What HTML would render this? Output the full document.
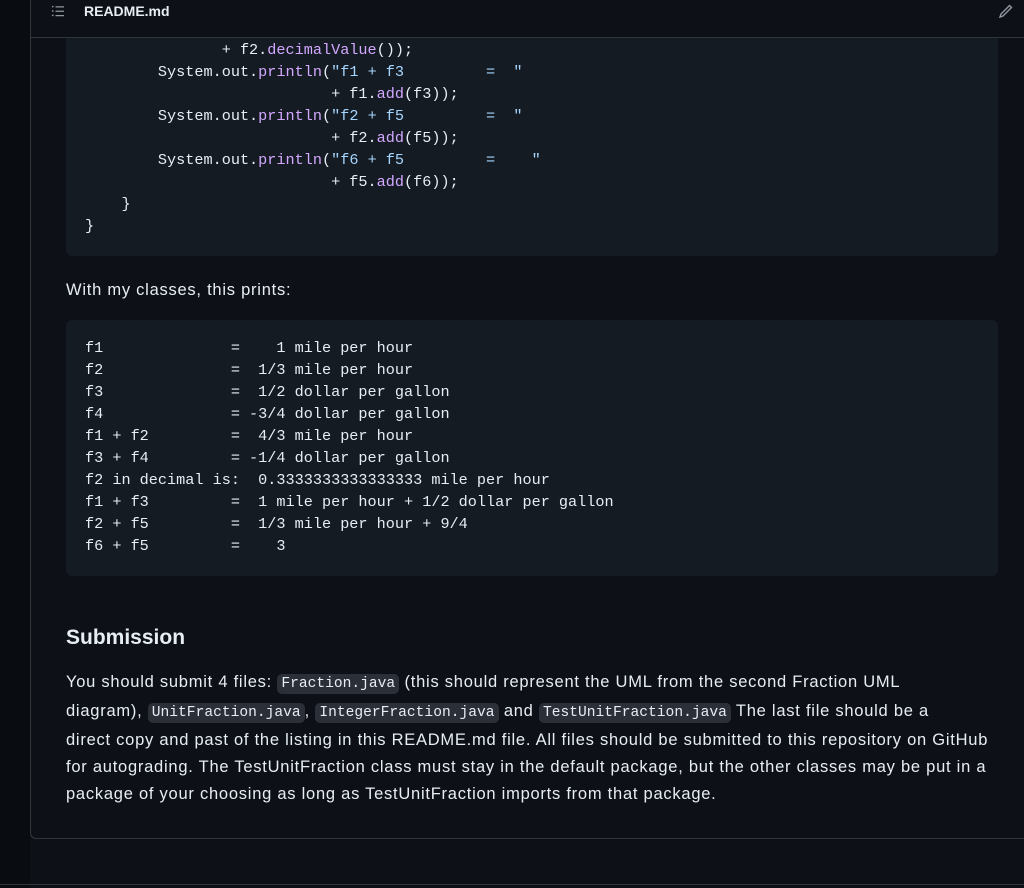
<!DOCTYPE html>
<html><head><style>
html,body{margin:0;padding:0;background:#0d1117;width:1024px;height:888px;overflow:hidden;font-family:"Liberation Sans",sans-serif;color:#e6edf3}
.outer{position:absolute;left:0;top:0;width:30px;height:888px;background:#090c10}
.box{position:absolute;left:30px;top:-10px;width:1010px;height:849px;border:1px solid #30363d;border-radius:6px;background:#0d1117;box-sizing:border-box}
.hdr{position:absolute;left:31px;top:0;width:993px;height:37px;border-bottom:1px solid #30363d;background:#0d1117}
.hdr .t{position:absolute;left:53px;top:2px;font-weight:bold;font-size:14px;line-height:18px}
pre{margin:0;font-family:"Liberation Mono",monospace;font-size:15.2px;line-height:22px;color:#e6edf3;white-space:pre}
.code{position:absolute;left:66px;width:932px;background:#151b23;border-radius:6px;box-sizing:border-box;padding:0 19px}
.p{color:#d2a8ff}.s{color:#a5d6ff}
.txt{position:absolute;left:66px;font-size:16.5px;line-height:27px;width:960px;white-space:nowrap;letter-spacing:0.75px}
code{font-family:"Liberation Mono",monospace;font-size:14.6px;background:#2b3038;border-radius:5px;padding:2px 4px;letter-spacing:0}
h2{position:absolute;left:66px;top:626px;margin:0;font-size:21px;font-weight:bold}
.bot{position:absolute;left:0;top:884px;width:1024px;height:1px;background:#30363d}
</style></head><body>
<div class="outer"></div>
<div class="box"></div>
<div class="code" style="top:37px;height:219px;border-radius:0 0 6px 6px"><pre style="padding-top:2px">               + f2.<span class="p">decimalValue</span>());
        System.out.<span class="p">println</span>(<span class="s">"f1 + f3         =  "</span>
                           + f1.<span class="p">add</span>(f3));
        System.out.<span class="p">println</span>(<span class="s">"f2 + f5         =  "</span>
                           + f2.<span class="p">add</span>(f5));
        System.out.<span class="p">println</span>(<span class="s">"f6 + f5         =    "</span>
                           + f5.<span class="p">add</span>(f6));
    }
}</pre></div>
<div class="hdr">
<svg style="position:absolute;left:20px;top:4px" width="14" height="14" viewBox="0 0 16 16" fill="#9198a1"><path d="M2 4a1 1 0 1 0 0-2 1 1 0 0 0 0 2Zm3.75-1.5a.75.75 0 0 0 0 1.5h8.5a.75.75 0 0 0 0-1.5h-8.5Zm0 5a.75.75 0 0 0 0 1.5h8.5a.75.75 0 0 0 0-1.5h-8.5Zm0 5a.75.75 0 0 0 0 1.5h8.5a.75.75 0 0 0 0-1.5h-8.5ZM3 8a1 1 0 1 1-2 0 1 1 0 0 1 2 0Zm-1 6a1 1 0 1 0 0-2 1 1 0 0 0 0 2Z"/></svg>
<div class="t">README.md</div>
<svg style="position:absolute;left:967px;top:3px" width="16" height="16" viewBox="0 0 16 16" fill="none" stroke="#9198a1" stroke-width="1.4"><path d="M11.5 2.5l2 2-8.5 8.5-3 1 1-3z"/></svg>
</div>
<div class="txt" style="top:277px">With my classes, this prints:</div>
<div class="code" style="top:320px;height:256px;padding-top:17px"><pre>f1              =    1 mile per hour
f2              =  1/3 mile per hour
f3              =  1/2 dollar per gallon
f4              = -3/4 dollar per gallon
f1 + f2         =  4/3 mile per hour
f3 + f4         = -1/4 dollar per gallon
f2 in decimal is:  0.3333333333333333 mile per hour
f1 + f3         =  1 mile per hour + 1/2 dollar per gallon
f2 + f5         =  1/3 mile per hour + 9/4
f6 + f5         =    3</pre></div>
<h2>Submission</h2>
<div class="txt" style="top:669px">You should submit 4 files: <code>Fraction.java</code> (this should represent the UML from the second Fraction UML<br>diagram), <code>UnitFraction.java</code>, <code>IntegerFraction.java</code> and <code>TestUnitFraction.java</code> The last file should be a<br>direct copy and past of the listing in this README.md file. All files should be submitted to this repository on GitHub<br>for autograding. The TestUnitFraction class must stay in the default package, but the other classes may be put in a<br>package of your choosing as long as TestUnitFraction imports from that package.</div>
<div class="bot"></div>
</body></html>
